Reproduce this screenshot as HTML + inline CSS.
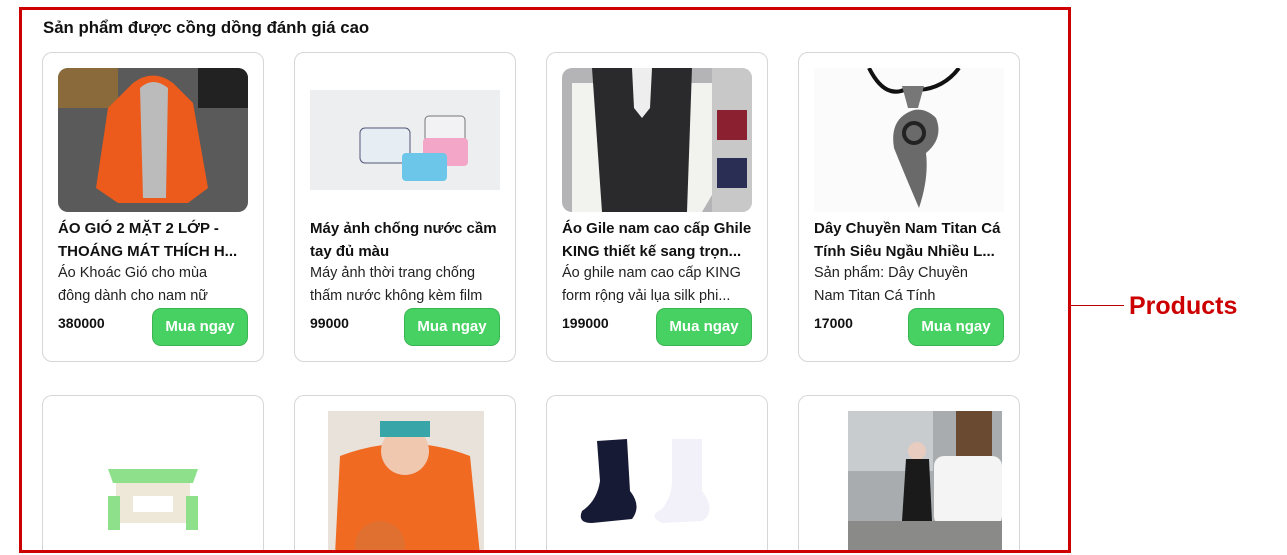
<!DOCTYPE html>
<html style="width:1287px;height:555px;overflow:hidden"><head><meta charset="utf-8"><style>
*{margin:0;padding:0;box-sizing:border-box}
body{width:1287px;height:555px;background:#fff;font-family:"Liberation Sans",Arial,sans-serif;position:relative;overflow:hidden;color:#111}
.box{position:absolute;left:19px;top:7px;width:1052px;height:546px;border:3px solid #cc0000;z-index:5}
.h{position:absolute;left:43px;top:18px;font-size:16.8px;font-weight:bold}
.card{position:absolute;width:222px;height:310px;border:1px solid #d6d6d6;border-radius:10px;background:#fff;overflow:hidden}
.r2{height:157px;border-bottom:none;border-radius:10px 10px 0 0}
.img{position:absolute;left:15px;top:15px;width:190px;height:144px;border-radius:10px;overflow:hidden}
.r2 .img{height:141px;border-radius:10px 10px 0 0}
.t{position:absolute;left:15px;top:164px;width:192px;font-size:15px;font-weight:bold;line-height:23px}
.d{position:absolute;left:15px;top:209px;width:182px;font-size:14.5px;line-height:23px;color:#222}
.p{position:absolute;left:15px;top:262px;font-size:14px;font-weight:bold}
.b{position:absolute;left:109px;top:255px;width:96px;height:38px;border-radius:9px;background:#47d163;border:1px solid #3bb552;color:#fff;font-weight:bold;font-size:15px;text-align:center;line-height:36px}
.line{position:absolute;left:1071px;top:305px;width:53px;height:1px;background:#b00}
.lab{position:absolute;left:1129px;top:292px;font-size:25px;font-weight:bold;color:#cc0000}
</style></head><body>
<div class="box"></div>
<div class="h">Sản phẩm được cồng dồng đánh giá cao</div>

<div class="card" style="left:42px;top:52px">
 <div class="img"><svg width="190" height="144"><rect width="190" height="144" fill="#5a5a5a"/><rect x="0" y="0" width="60" height="40" fill="#8a6a3a"/><rect x="140" y="0" width="50" height="40" fill="#222"/><path d="M75 15 Q95 0 115 15 L135 35 L150 120 L130 135 L60 135 L38 120 L50 40Z" fill="#ec5a1c"/><path d="M82 20 Q95 8 110 20 L108 130 L85 130Z" fill="#bbb"/></svg></div>
 <div class="t">ÁO GIÓ 2 MẶT 2 LỚP - THOÁNG MÁT THÍCH H...</div>
 <div class="d">Áo Khoác Gió cho mùa đông dành cho nam nữ</div>
 <div class="p">380000</div><div class="b">Mua ngay</div>
</div>

<div class="card" style="left:294px;top:52px">
 <div class="img" style="border-radius:0"><svg width="190" height="144"><rect y="22" width="190" height="100" fill="#eceef0"/><rect x="50" y="60" width="50" height="35" rx="5" fill="#e6eef4" stroke="#557"/><rect x="115" y="48" width="40" height="30" rx="4" fill="#f2f2f4" stroke="#777"/><rect x="113" y="70" width="45" height="28" rx="4" fill="#f4a6c8"/><rect x="92" y="85" width="45" height="28" rx="4" fill="#6cc6ea"/></svg></div>
 <div class="t">Máy ảnh chống nước cầm tay đủ màu</div>
 <div class="d">Máy ảnh thời trang chống thấm nước không kèm film</div>
 <div class="p">99000</div><div class="b">Mua ngay</div>
</div>

<div class="card" style="left:546px;top:52px">
 <div class="img"><svg width="190" height="144"><rect width="190" height="144" fill="#b4b4b6"/><path d="M10 15 L150 15 L160 110 L140 144 L10 144Z" fill="#f2f2ee"/><path d="M30 0 L130 0 L125 144 L40 144Z" fill="#2a2a2c"/><path d="M70 0 L90 0 L88 40 L80 50 L72 40Z" fill="#eee"/><rect x="150" y="0" width="40" height="144" fill="#c8c8c8"/><rect x="155" y="42" width="30" height="30" fill="#8a2030"/><rect x="155" y="90" width="30" height="30" fill="#2a2e55"/></svg></div>
 <div class="t">Áo Gile nam cao cấp Ghile KING thiết kế sang trọn...</div>
 <div class="d">Áo ghile nam cao cấp KING form rộng vải lụa silk phi...</div>
 <div class="p">199000</div><div class="b">Mua ngay</div>
</div>

<div class="card" style="left:798px;top:52px">
 <div class="img" style="border-radius:0"><svg width="190" height="144"><rect width="190" height="144" fill="#fbfbfb"/><path d="M55 0 Q70 30 90 22 M145 0 Q130 20 105 22" stroke="#111" stroke-width="4" fill="none"/><path d="M88 18 L110 18 L104 40 L94 40Z" fill="#777"/><path d="M100 42 Q75 50 80 80 Q90 105 105 140 Q115 110 112 85 Q130 70 122 50 Q112 40 100 42Z" fill="#6a6a6a"/><circle cx="100" cy="65" r="10" fill="none" stroke="#222" stroke-width="4"/></svg></div>
 <div class="t">Dây Chuyền Nam Titan Cá Tính Siêu Ngầu Nhiều L...</div>
 <div class="d">Sản phẩm: Dây Chuyền Nam Titan Cá Tính</div>
 <div class="p">17000</div><div class="b">Mua ngay</div>
</div>

<div class="card r2" style="left:42px;top:395px">
 <div class="img"><svg width="190" height="144"><path d="M50 58 L140 58 L135 72 L55 72Z" fill="#8ee08a"/><rect x="58" y="72" width="74" height="40" fill="#eee8d8"/><rect x="50" y="85" width="12" height="34" fill="#8ee08a"/><rect x="128" y="85" width="12" height="34" fill="#8ee08a"/><rect x="75" y="85" width="40" height="16" fill="#fff"/></svg></div>
</div>

<div class="card r2" style="left:294px;top:395px">
 <div class="img" style="border-radius:0"><svg width="190" height="144"><rect x="18" y="0" width="156" height="144" fill="#e8e2da"/><path d="M30 45 Q95 20 160 45 L170 144 L25 144Z" fill="#f06a22"/><circle cx="95" cy="40" r="24" fill="#f0c8b0"/><rect x="70" y="10" width="50" height="16" fill="#38a6a8"/><circle cx="70" cy="135" r="25" fill="#e07030"/></svg></div>
</div>

<div class="card r2" style="left:546px;top:395px">
 <div class="img"><svg width="190" height="144"><path d="M35 30 L65 28 L68 80 Q80 95 70 108 L30 112 Q15 112 20 100 Q35 90 38 70Z" fill="#161a34"/><path d="M110 28 L140 28 L140 80 Q155 100 140 110 L100 112 Q85 105 100 98 Q110 85 110 70Z" fill="#f2f0f8"/></svg></div>
</div>

<div class="card r2" style="left:798px;top:395px">
 <div class="img" style="border-radius:0"><svg width="190" height="144"><rect x="34" y="0" width="154" height="144" fill="#a8acae"/><rect x="34" y="0" width="85" height="60" fill="#c8ccce"/><rect x="142" y="0" width="36" height="45" fill="#6a4a30"/><rect x="120" y="45" width="68" height="70" rx="10" fill="#f4f4f4"/><rect x="34" y="110" width="154" height="34" fill="#8a8a88"/><circle cx="103" cy="40" r="9" fill="#e8ccc0"/><path d="M92 48 L115 48 L118 110 L88 110Z" fill="#1a1a1a"/></svg></div>
</div>

<div class="line"></div>
<div class="lab">Products</div>
</body></html>
